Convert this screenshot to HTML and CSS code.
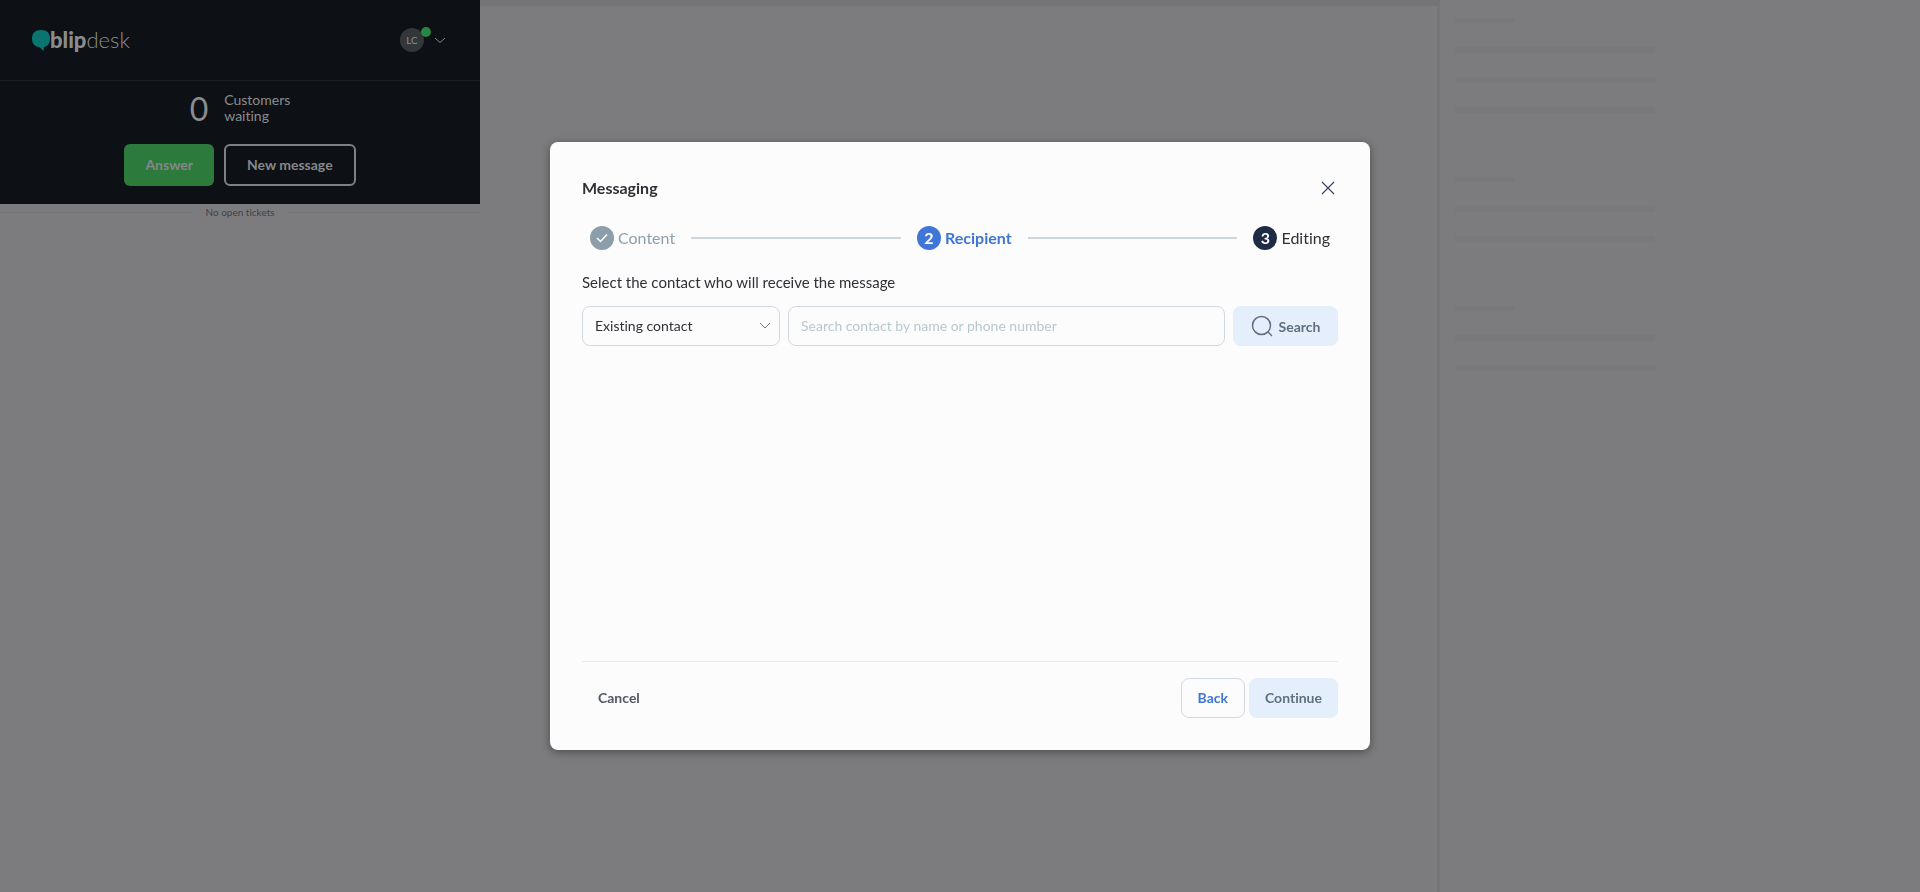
FILE: index.html
```html
<!DOCTYPE html>
<html lang="en">
<head>
  <meta charset="UTF-8">
  <meta name="viewport" content="width=device-width, initial-scale=1">
  <title>Blip Desk - Messaging</title>
  <link rel="stylesheet" href="styles.css">
</head>
<body>
  <div class="desk">
    <aside class="sidebar">
      <header class="sidebar-header">
        <div class="topbar">
          <a href="#" class="logo">
            <svg width="18" height="21" viewBox="0 0 18 21" aria-hidden="true">
              <path d="M9 0C3 0 0 3 0 8.500C0 14 3 16.500 8 17.500L11.500 21L12 17C16 16 18 13.500 18 8.500C18 3 15 0 9 0Z" fill="#0a7570"/>
            </svg>
            <span class="logo-text"><b>blip</b>desk</span>
          </a>
          <button type="button" class="user-menu" aria-label="User menu">
            <span class="avatar">LC<span class="status"></span></span>
            <svg width="12" height="7" viewBox="0 0 12 7" fill="none" stroke="#85878a" aria-hidden="true"><path d="M1 1l5 4.500L11 1"/></svg>
          </button>
        </div>
        <div class="queue">
          <span class="queue-count">0</span>
          <span class="queue-label">Customers<br>waiting</span>
        </div>
        <div class="queue-actions">
          <button type="button" class="btn-answer">Answer</button>
          <button type="button" class="btn-message">New message</button>
        </div>
      </header>
      <div class="no-tickets">No open tickets</div>
    </aside>
    <main class="conversation"></main>
    <!-- Contact details, still loading -->
    <aside class="details">
      <div class="skeleton short"></div>
      <div class="skeleton"></div>
      <div class="skeleton"></div>
      <div class="skeleton"></div>
      <div class="skeleton short group"></div>
      <div class="skeleton"></div>
      <div class="skeleton"></div>
      <div class="skeleton short group"></div>
      <div class="skeleton"></div>
      <div class="skeleton"></div>
    </aside>
  </div>

  <div class="overlay">
    <form class="modal" role="dialog" aria-labelledby="modal-title">
      <div class="modal-header">
        <h1 id="modal-title">Messaging</h1>
        <button type="button" class="close" aria-label="Close">
          <svg width="14" height="14" viewBox="0 0 14 14" fill="none" stroke="#3c4366" stroke-width="1.200" aria-hidden="true"><path d="M1 1l12 12M13 1l-12 12"/></svg>
        </button>
      </div>

      <ol class="stepper">
        <li class="step done">
          <span class="step-number">
            <svg width="12" height="10" viewBox="0 0 12 10" fill="none" stroke="#fff" stroke-width="1.500" aria-hidden="true"><path d="M1 5l3.500 3.500L11 1.500"/></svg>
          </span>
          Content
        </li>
        <li class="line"></li>
        <li class="step active"><span class="step-number">2</span>Recipient</li>
        <li class="line"></li>
        <li class="step"><span class="step-number">3</span>Editing</li>
      </ol>

      <label class="hint" for="contact-search">Select the contact who will receive the message</label>
      <div class="search-row">
        <div class="select-box">
          <select aria-label="Contact type">
            <option>Existing contact</option>
            <option>New contact</option>
          </select>
          <svg class="select-arrow" width="12" height="8" viewBox="0 0 12 8" fill="none" stroke="#6e7b91" aria-hidden="true"><path d="M1 1l5 5 5-5"/></svg>
        </div>
        <input type="text" id="contact-search" placeholder="Search contact by name or phone number">
        <button type="button" class="btn-search">
          <svg width="22" height="22" viewBox="0 0 22 22" fill="none" stroke="#5f6f80" stroke-width="1.500" aria-hidden="true"><circle cx="10.500" cy="10.500" r="9"/><path d="M17 17l4 4"/></svg>
          Search
        </button>
      </div>

      <div class="modal-footer">
        <button type="button" class="btn btn-cancel">Cancel</button>
        <button type="button" class="btn btn-back">Back</button>
        <button type="submit" class="btn btn-continue">Continue</button>
      </div>
    </form>
  </div>
</body>
</html>
```
FILE: styles.css
```css
/* Global Styles */
* {
  margin: 0;
  padding: 0;
  box-sizing: border-box;
}
body {
  font-family: Lato, "Open Sans", sans-serif;
  font-size: 14px;
  font-variant-ligatures: none;
  color: #2f3135;
  background: #7c7c7e;
}
button, input, select {
  font: inherit;
  font-variant-ligatures: none;
}
button {
  border: none;
  background: none;
  cursor: pointer;
}
a {
  text-decoration: none;
}

/* Page behind the modal */
.desk {
  display: flex;
  min-height: 100vh;
}
.sidebar {
  width: 25%;
}
.sidebar-header {
  background: #0d1115;
  color: #8b8c8f;
  padding-bottom: 18px;
}
.topbar {
  display: flex;
  align-items: center;
  justify-content: space-between;
  height: 81px;
  padding: 0 34px 0 32px;
  border-bottom: 1px solid #1d2021;
}
.logo {
  display: flex;
  align-items: center;
  color: #8b8c8f;
}
.logo-text {
  font-size: 22px;
  line-height: 24px;
  font-weight: 300;
}
.logo-text b {
  font-weight: 900;
}
.user-menu {
  display: flex;
  align-items: center;
  gap: 10px;
}
.avatar {
  position: relative;
  width: 24px;
  height: 24px;
  border-radius: 50%;
  background: #34373a;
  color: #8b8c8f;
  font-size: 10px;
  line-height: 24px;
}
.status {
  position: absolute;
  top: -1px;
  right: -7px;
  width: 10px;
  height: 10px;
  border-radius: 50%;
  background: #2b8540;
}
.queue {
  display: flex;
  align-items: center;
  justify-content: center;
  gap: 16px;
  height: 54px;
}
.queue-count {
  font-size: 32px;
}
.queue-label {
  line-height: 16px;
}
.queue-actions {
  display: flex;
  justify-content: center;
  gap: 10px;
  margin-top: 9px;
}
.btn-answer, .btn-message {
  height: 42px;
  padding: 0 21px 2px;
  border-radius: 6px;
  color: #85878a;
  font-weight: bold;
}
.btn-answer {
  background: #2c7a3c;
}
.btn-message {
  border: 2px solid #7f8083;
}
.no-tickets {
  display: flex;
  align-items: center;
  gap: 12px;
  color: #404246;
  font-size: 10px;
  line-height: 16px;
}
.no-tickets::before, .no-tickets::after {
  content: "";
  flex: 1;
  height: 1px;
  background: #737477;
}
.conversation {
  flex: 1;
  border-top: 6px solid #747476;
  border-right: 3px solid #767678;
}
.details {
  width: 25%;
  padding: 18px 15px;
}
.skeleton {
  width: 200px;
  height: 6px;
  margin-bottom: 24px;
  background: #79797b;
}
.skeleton.short {
  width: 60px;
  height: 5px;
}
.skeleton.group {
  margin-top: 64px;
}

/* Modal */
.overlay {
  position: fixed;
  inset: 0;
  display: flex;
  align-items: center;
  justify-content: center;
}
.modal {
  display: flex;
  flex-direction: column;
  width: 820px;
  max-width: 100%;
  min-height: 608px;
  padding: 32px;
  border-radius: 8px;
  background: #fcfcfd;
  box-shadow: 0 2px 8px rgba(0, 0, 0, 0.4);
}
.modal-header {
  display: flex;
  align-items: center;
  justify-content: space-between;
  height: 28px;
}
.modal-header h1 {
  font-size: 16px;
  line-height: 24px;
}
.close {
  display: flex;
  padding: 3px;
}
.stepper {
  display: flex;
  align-items: center;
  gap: 16px;
  margin-top: 24px;
  padding: 0 8px;
  list-style: none;
}
.step {
  display: flex;
  align-items: center;
  gap: 4px;
  font-size: 16px;
  line-height: 24px;
}
.step-number {
  display: flex;
  align-items: center;
  justify-content: center;
  width: 24px;
  height: 24px;
  border-radius: 50%;
  background: #1f2a44;
  color: #fff;
  font-weight: bold;
}
.step.done {
  color: #8fa0ac;
}
.step.done .step-number {
  background: #8b9eaa;
}
.step.active {
  color: #3f76d5;
  font-weight: bold;
}
.step.active .step-number {
  background: #3f76d8;
}
.line {
  flex: 1;
  height: 2px;
  background: #cdd5da;
}
.hint {
  margin-top: 20px;
  font-size: 15px;
  line-height: 24px;
}
.search-row {
  display: flex;
  gap: 8px;
  margin-top: 12px;
}
.select-box {
  position: relative;
  width: 198px;
}
.select-box select, .search-row input {
  width: 100%;
  height: 40px;
  padding: 0 12px 2px;
  border: 1px solid #d3d9e2;
  border-radius: 8px;
  background: transparent;
  color: #2f3135;
}
.select-box select {
  appearance: none;
}
.select-arrow {
  position: absolute;
  top: 16px;
  right: 9px;
  pointer-events: none;
}
.search-row input {
  flex: 1;
  width: auto;
}
.search-row input::placeholder {
  color: #b8c8cc;
}
.btn-search {
  display: flex;
  align-items: center;
  justify-content: center;
  gap: 6px;
  width: 105px;
  height: 40px;
  border-radius: 8px;
  background: #e4effb;
  color: #5f6f80;
  font-weight: bold;
}
.modal-footer {
  display: flex;
  gap: 4px;
  margin-top: auto;
  padding-top: 16px;
  border-top: 1px solid #e3e7ef;
}
.btn {
  height: 40px;
  padding: 0 16px 2px;
  border-radius: 8px;
  font-weight: bold;
}
.btn-cancel {
  margin-right: auto;
  color: #505766;
}
.btn-back {
  border: 1px solid #d3d9e2;
  color: #3f76d5;
}
.btn-continue {
  background: #e4effb;
  color: #5f6f80;
}
```
